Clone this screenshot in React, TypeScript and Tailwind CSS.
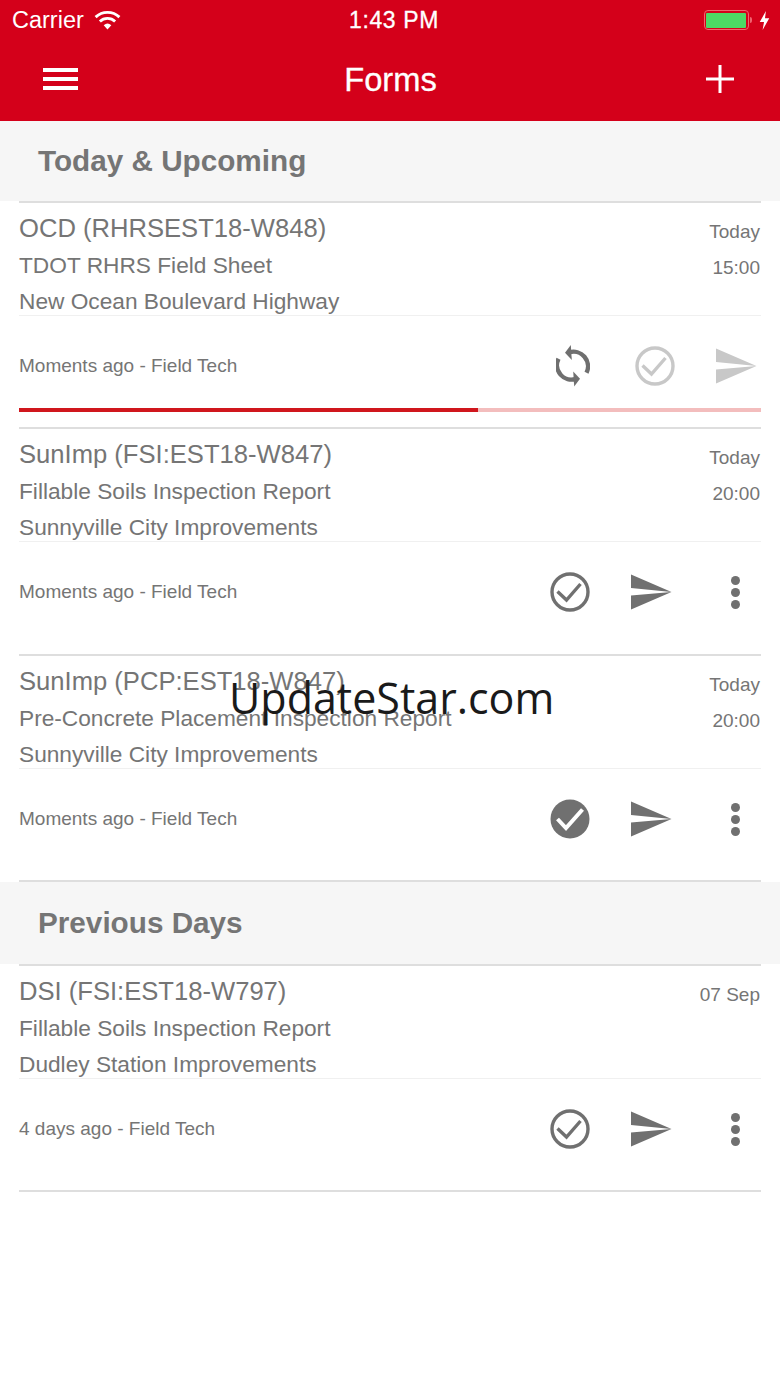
import React from "react";

const sans = "font-['Liberation_Sans',Arial,sans-serif]";

function SendIcon({ color }: { color: string }) {
	return (
		<svg width="42" height="36" viewBox="0 0 42 36" className="shrink-0">
			<path d="M1 0.5 L41.5 18 L1 14 Z" fill={color} />
			<path d="M1 21.5 L41.5 18 L1 35.5 Z" fill={color} />
		</svg>
	);
}

function CheckIcon({ color, filled }: { color: string; filled?: boolean }) {
	return (
		<svg width="40" height="40" viewBox="0 0 40 40" className="shrink-0">
			{filled ? (
				<>
					<circle cx="20" cy="20" r="19.5" fill={color} />
					<path d="M7.5 20 L16 29 L32.5 10.5" fill="none" stroke="#fff" strokeWidth="4" />
				</>
			) : (
				<>
					<circle cx="20" cy="20" r="18" fill="none" stroke={color} strokeWidth="3.4" />
					<path d="M7.5 19.5 L16.5 28 L30.5 12" fill="none" stroke={color} strokeWidth="3.4" />
				</>
			)}
		</svg>
	);
}

function SyncIcon() {
	const half = (
		<>
			<path d="M13 8.5 A14.5 14.5 0 0 1 30.5 28.7" fill="none" stroke="#6f6f6f" strokeWidth="4.4" />
			<path d="M9 8.7 L14.8 1 L15.8 16 Z" fill="#6f6f6f" />
		</>
	);
	return (
		<svg width="34" height="44" viewBox="0 0 34 44" className="shrink-0">
			{half}
			<g transform="rotate(180 16.5 21.7)">{half}</g>
		</svg>
	);
}

function DotsIcon() {
	return (
		<div className="flex w-[9px] flex-col gap-[3px]">
			<div className="h-[9px] w-[9px] rounded-full bg-[#707070]" />
			<div className="h-[9px] w-[9px] rounded-full bg-[#707070]" />
			<div className="h-[9px] w-[9px] rounded-full bg-[#707070]" />
		</div>
	);
}

type FormCard = {
	title: string;
	form: string;
	place: string;
	date: string;
	time?: string;
	meta: string;
	filled?: boolean;
};

function CardTop({ card }: { card: FormCard }) {
	return (
		<div className="flex h-[113px] justify-between border-b border-[#f0f0f0] text-[#757575]">
			<div className="flex flex-col">
				<span className="mt-[7px] h-[36.5px] text-[25.6px] leading-[36px]">{card.title}</span>
				<span className="h-[36px] text-[22.7px] leading-[36px]">{card.form}</span>
				<span className="h-[28px] text-[22.7px] leading-[36px]">{card.place}</span>
			</div>
			<div className="flex flex-col items-end pr-[1px] text-[19px]">
				<span className="mt-[11px] h-[36px] leading-[36px]">{card.date}</span>
				{card.time && <span className="h-[36px] leading-[36px]">{card.time}</span>}
			</div>
		</div>
	);
}

function Card({ card, height }: { card: FormCard; height: string }) {
	return (
		<div className={`mx-[19px] border-t-2 border-[#dedede] bg-white ${height}`}>
			<CardTop card={card} />
			<div className="flex h-[100px] items-center justify-between">
				<span className="text-[19px] text-[#757575]">{card.meta}</span>
				<div className="flex items-center">
					<CheckIcon color="#707070" filled={card.filled} />
					<div className="ml-[40px]">
						<SendIcon color="#707070" />
					</div>
					<div className="ml-[59px] mr-[21px]">
						<DotsIcon />
					</div>
				</div>
			</div>
		</div>
	);
}

function SyncingCard({ card }: { card: FormCard }) {
	return (
		<div className="mx-[19px] h-[226px] border-t-2 border-[#dedede] bg-white">
			<CardTop card={card} />
			<div className="flex h-[92px] items-center justify-between pt-[8px]">
				<span className="text-[19px] text-[#757575]">{card.meta}</span>
				<div className="flex items-center">
					<SyncIcon />
					<div className="ml-[45px]">
						<CheckIcon color="#c8c8c8" />
					</div>
					<div className="ml-[40px] mr-[4px]">
						<SendIcon color="#c8c8c8" />
					</div>
				</div>
			</div>
			<div className="flex h-[4px]">
				<div className="w-[459px] bg-[#d0161d]" />
				<div className="flex-1 bg-[#f3bdbd]" />
			</div>
		</div>
	);
}

export default function App() {
	return (
		<div className={`${sans} relative h-[1387px] w-[780px] overflow-hidden bg-white`}>
			<div className="h-[121px] bg-[#d4001a] text-white">
				<div className="flex h-[40px] items-center justify-between pl-[12px] pr-[10px]">
					<div className="flex w-[200px] items-center gap-[10px] text-[23.5px]">
						<span className="mt-[1px]">Carrier</span>
						<svg width="27" height="20" viewBox="0 0 28 21">
							<path d="M1.5 7.5 A18 18 0 0 1 26.5 7.5" fill="none" stroke="#fff" strokeWidth="3" />
							<path d="M6 12 A11.5 11.5 0 0 1 22 12" fill="none" stroke="#fff" strokeWidth="3" />
							<path d="M10 16 A6 6 0 0 1 18 16 L14 20.5 Z" fill="#fff" />
						</svg>
					</div>
					<span className="ml-[6px] text-[23px] tracking-[0.6px] [-webkit-text-stroke:0.3px_#fff]">1:43 PM</span>
					<div className="flex w-[200px] items-center justify-end">
						<div className="flex h-[20px] w-[45px] items-center rounded-[4px] border-[1.5px] border-[#f0636f] p-[1.5px]">
							<div className="h-full w-full rounded-[1px] bg-[#4cd964]" />
						</div>
						<div className="ml-[1px] h-[6px] w-[2px] rounded-r-[2px] bg-[#f0636f]" />
						<svg width="11" height="19" viewBox="0 0 11 20" className="ml-[7px]">
							<path d="M7 0 L0.5 11.5 L5 11.5 L3.5 20 L10.5 7.5 L6 7.5 Z" fill="#fff" />
						</svg>
					</div>
				</div>
				<div className="flex h-[81px] items-center justify-between pb-[4px] pl-[43px] pr-[46px]">
					<div className="flex w-[35px] flex-col gap-[5px]">
						<div className="h-[4px] bg-white" />
						<div className="h-[4px] bg-white" />
						<div className="h-[4px] bg-white" />
					</div>
					<span className="mt-[3px] text-[32.7px] leading-none [-webkit-text-stroke:0.3px_#fff]">Forms</span>
					<div className="flex w-[31px] justify-end">
						<svg width="28" height="28" viewBox="0 0 28 28">
							<path d="M14 0 V28 M0 14 H28" stroke="#fff" strokeWidth="3" />
						</svg>
					</div>
				</div>
			</div>

			<div className="flex h-[80px] items-center bg-[#f6f6f6] pl-[38px] text-[29.7px] font-bold text-[#757575]">
				Today &amp; Upcoming
			</div>
			<SyncingCard
				card={{
					title: "OCD (RHRSEST18-W848)",
					form: "TDOT RHRS Field Sheet",
					place: "New Ocean Boulevard Highway",
					date: "Today",
					time: "15:00",
					meta: "Moments ago - Field Tech",
				}}
			/>
			<Card
				height="h-[227px]"
				card={{
					title: "SunImp (FSI:EST18-W847)",
					form: "Fillable Soils Inspection Report",
					place: "Sunnyville City Improvements",
					date: "Today",
					time: "20:00",
					meta: "Moments ago - Field Tech",
				}}
			/>
			<Card
				height="h-[226px]"
				card={{
					title: "SunImp (PCP:EST18-W847)",
					form: "Pre-Concrete Placement Inspection Report",
					place: "Sunnyville City Improvements",
					date: "Today",
					time: "20:00",
					meta: "Moments ago - Field Tech",
					filled: true,
				}}
			/>
			<div className="mx-[19px] h-[2px] bg-[#dedede]" />
			<div className="flex h-[82px] items-center bg-[#f6f6f6] pl-[38px] text-[29.7px] font-bold text-[#757575]">
				Previous Days
			</div>
			<Card
				height="h-[226px]"
				card={{
					title: "DSI (FSI:EST18-W797)",
					form: "Fillable Soils Inspection Report",
					place: "Dudley Station Improvements",
					date: "07 Sep",
					meta: "4 days ago - Field Tech",
				}}
			/>
			<div className="mx-[19px] h-[2px] bg-[#dedede]" />

			<div className="absolute left-[229px] top-[670px] font-['Open_Sans',sans-serif] text-[43px] leading-[56px] text-[#1a1a1a]">
				UpdateStar.com
			</div>
		</div>
	);
}
